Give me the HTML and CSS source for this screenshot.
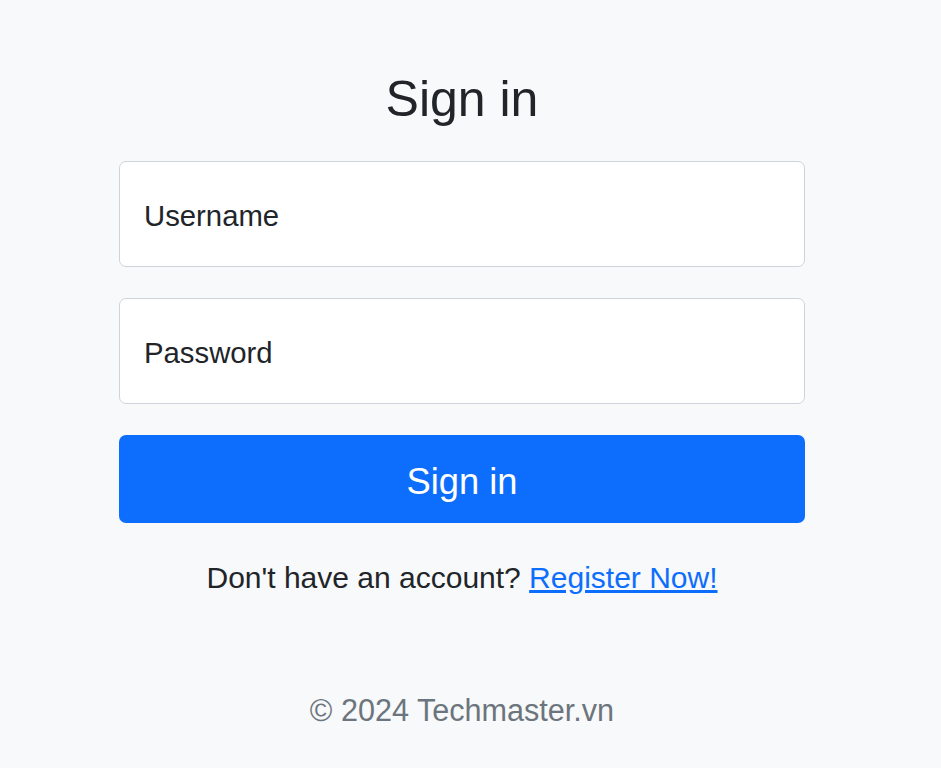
FILE: index.html
```html
<!DOCTYPE html>
<html lang="en">
<head>
  <meta charset="UTF-8">
  <meta name="viewport" content="width=device-width, initial-scale=1.0">
  <title>Sign in</title>
  <link rel="stylesheet" href="styles.css">
</head>
<body>
  <main class="signin">
    <h1>Sign in</h1>
    <form>
      <input class="field" type="text" placeholder="Username" required>
      <input class="field" type="password" placeholder="Password" required>
      <button class="btn" type="submit">Sign in</button>
    </form>
    <p class="register">Don't have an account? <a href="register.html">Register Now!</a></p>
    <p class="copyright">&copy; 2024 Techmaster.vn</p>
  </main>
</body>
</html>
```

FILE: styles.css
```css
body { font-family: "Liberation Sans", Arial, sans-serif; margin: 0; padding: 0 17px 0 0; background: #f8f9fa; color: #212529; }
.signin { width: 686px; margin: 0 auto; padding-top: 69px; text-align: center; }
h1 { font-size: 50px; font-weight: 400; line-height: 1.2; margin: 0 0 32px; }
form { display: flex; flex-direction: column; gap: 31px; }
.field { box-sizing: border-box; width: 100%; height: 106px; padding: 4px 24px 0; font-family: inherit; font-size: 29.3px; color: #212529; background: #fff; border: 1.5px solid #ced4da; border-radius: 7px; outline: none; }
.field::placeholder { color: #212529; opacity: 1; }
.btn { height: 88px; padding-top: 6px; background: #0d6efd; color: #fff; border: none; border-radius: 7px; font-family: inherit; font-size: 36.3px; cursor: pointer; }
.btn:hover { background: #0b5ed7; }
.register, .copyright { font-size: 30px; line-height: 1.5; margin: 0; }
.register { margin-top: 32px; }
.register a { color: #0d6efd; text-decoration: underline; }
.copyright { margin-top: 88px; font-size: 30.6px; color: #6c757d; }
```
